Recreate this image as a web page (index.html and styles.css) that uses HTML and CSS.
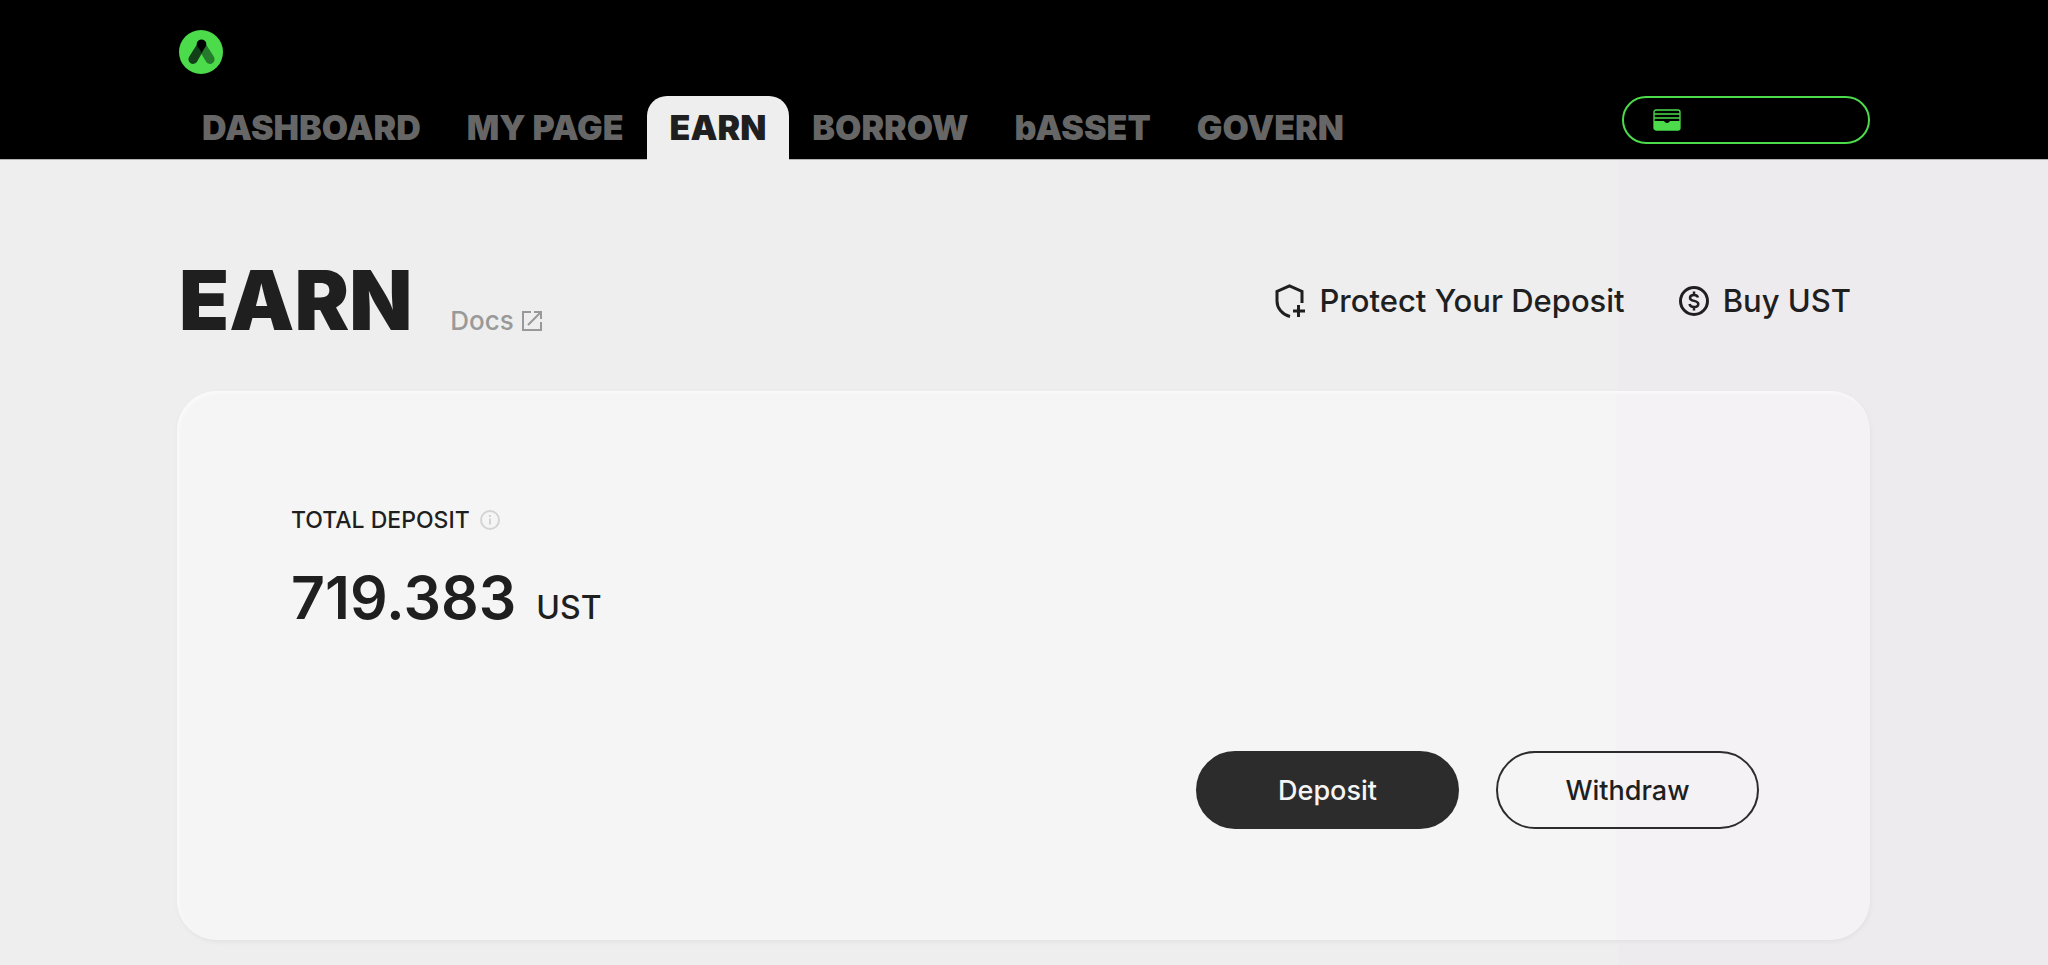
FILE: index.html
```html
<!DOCTYPE html>
<html lang="en">
<head>
<meta charset="utf-8">
<meta name="viewport" content="width=device-width, initial-scale=1">
<title>Earn</title>
<link rel="stylesheet" href="styles.css">
</head>
<body>
<header class="header">
  <a class="logo" href="#" aria-label="Home">
    <svg viewBox="0 0 44 44" width="44" height="44" aria-hidden="true">
      <circle cx="22" cy="22" r="22" fill="#4bdb4b"/>
      <path d="M18.200 16.500a4.500 4.500 0 0 1 8-3.500l8.500 13.500a4.500 4.500 0 0 1-7.500 5.500z" fill="#257a2b"/>
      <path d="M26.800 16.500a4.500 4.500 0 0 0-8-3.500l-8.500 13.500a4.500 4.500 0 0 0 7.500 5.500z" fill="#123f17"/>
      <path d="M22.500 9.500a4.500 4.500 0 0 1 4.300 6.500c-1 2-3.300 3.500-4.300 7-1-3.500-3.300-5-4.300-7a4.500 4.500 0 0 1 4.300-6.500z" fill="#000"/>
    </svg>
  </a>
  <div class="bar">
    <nav class="nav">
      <a class="tab" href="#">DASHBOARD</a>
      <a class="tab" href="#">MY PAGE</a>
      <a class="tab tab-active" href="#" aria-current="page">EARN</a>
      <a class="tab" href="#">BORROW</a>
      <a class="tab" href="#">bASSET</a>
      <a class="tab" href="#">GOVERN</a>
    </nav>
    <button class="wallet" type="button" aria-label="Wallet">
      <svg viewBox="0 0 28 22" width="28" height="22" aria-hidden="true">
        <rect x="1" y="1" width="26" height="20" rx="2" fill="none" stroke="#4bdb4b" stroke-width="1.300"/>
        <path d="M1 5h26M1 9h26" stroke="#4bdb4b" stroke-width="1.300"/>
        <path d="M1 12h9.500c1 0 1.500 2 3.500 2s2.500-2 3.500-2H27v7a2 2 0 0 1-2 2H3a2 2 0 0 1-2-2z" fill="#4bdb4b"/>
      </svg>
    </button>
  </div>
</header>
<main class="main">
  <div class="heading">
    <h1 class="title">EARN</h1>
    <a class="docs" href="#">Docs
      <svg viewBox="0 0 20 20" width="20" height="20" fill="none" stroke="currentColor" stroke-width="2" aria-hidden="true">
        <path d="M9 1H1v18h18v-8M12 1h7v7M19 1L6 14"/>
      </svg>
    </a>
    <div class="links">
      <a class="link" href="#">
        <svg viewBox="0 0 30 34" width="30" height="34" fill="none" stroke="currentColor" stroke-width="3" aria-hidden="true">
          <path d="M27 19V7.500L14.500 2 2 7.500V17c0 7 5 13.500 13 15.500M23.500 21v12M18 27h12"/>
        </svg>
        Protect Your Deposit
      </a>
      <a class="link" href="#">
        <svg viewBox="0 0 30 30" width="30" height="30" fill="none" stroke="currentColor" stroke-width="3" aria-hidden="true">
          <circle cx="15" cy="15" r="13.500"/>
          <path d="M19 11.500c-.6-2-2-2.500-4-2.500-2.300 0-4 1-4 2.900 0 4.200 8.300 1.800 8.300 6.100 0 2-1.800 3-4.300 3-2.300 0-4-.8-4.500-3M15 5.500V9M15 21v3.500" stroke-width="2.500"/>
        </svg>
        Buy UST
      </a>
    </div>
  </div>
  <section class="card">
    <h2 class="label">TOTAL DEPOSIT
      <svg viewBox="0 0 20 20" width="20" height="20" fill="none" stroke="#d4d4d4" stroke-width="2" aria-hidden="true">
        <circle cx="10" cy="10" r="9"/><path d="M10 8.500v6M10 5v2"/>
      </svg>
    </h2>
    <p class="amount">719.383 <span class="unit">UST</span></p>
    <div class="actions">
      <button class="button button-dark" type="button">Deposit</button>
      <button class="button" type="button">Withdraw</button>
    </div>
  </section>
</main>
</body>
</html>
```
FILE: styles.css
```css
* { box-sizing: border-box; }
body {
  margin: 0;
  min-height: 100vh;
  background: linear-gradient(90deg, #eeeeee 79%, #eeebee 79%);
  color: #1f1f1f;
  font-family: Inter, "Noto Sans", sans-serif;
  font-weight: 500;
}
a { color: inherit; text-decoration: none; }
svg { display: block; flex: none; }
.header {
  background: #000;
  padding: 30px 178px 0 179px;
  border-bottom: 1px solid #b4b4b4;
}
.logo { display: inline-block; vertical-align: top; }
.bar {
  display: flex;
  justify-content: space-between;
  align-items: flex-start;
  margin-top: 22px;
}
.nav { display: flex; }
.tab {
  height: 63px;
  padding: 0 23px;
  color: #666;
  font-size: 34px;
  font-weight: 900;
  line-height: 64px;
}
.tab-active {
  height: 64px;
  margin-bottom: -1px;
  background: #eee;
  color: #1f1f1f;
  border-radius: 20px 20px 0 0;
}
.wallet {
  display: flex;
  align-items: center;
  width: 248px;
  height: 48px;
  padding: 0 29px;
  background: #000;
  border: 2px solid #4bdb4b;
  border-radius: 24px;
}
.main { padding: 92px 178px 24px 177px; }
.heading { display: flex; align-items: flex-end; }
.title {
  margin: 0;
  padding-left: 2px;
  font-size: 82px;
  font-weight: 900;
  line-height: 98px;
}
.docs {
  display: flex;
  align-items: center;
  gap: 8px;
  margin: 0 0 13px 38px;
  color: #999;
  font-size: 26px;
  line-height: 32px;
}
.links {
  display: flex;
  gap: 54px;
  margin: 0 19px 30px auto;
}
.link {
  display: flex;
  align-items: center;
  gap: 14px;
  font-size: 31px;
  line-height: 38px;
}
.card {
  margin-top: 41px;
  padding: 114px 111px 111px 114px;
  background: linear-gradient(90deg, #f5f5f5 85%, #f4f2f5 85%);
  border-radius: 40px;
  box-shadow: inset 2px 2px 3px #fafafa, 1px 2px 4px #e2e2e2;
}
.label {
  display: flex;
  align-items: center;
  gap: 10px;
  margin: 0;
  font-size: 23px;
  font-weight: 500;
  line-height: 30px;
}
.amount {
  display: flex;
  align-items: baseline;
  gap: 20px;
  margin: 28px 0 0;
  font-size: 59px;
  font-weight: 600;
  line-height: 70px;
}
.unit { font-size: 32px; font-weight: 500; }
.actions {
  display: flex;
  justify-content: flex-end;
  gap: 37px;
  margin-top: 108px;
}
.button {
  width: 263px;
  height: 78px;
  border: 2px solid #2c2c2c;
  border-radius: 39px;
  background: transparent;
  color: #1f1f1f;
  font: inherit;
  font-size: 27px;
}
.button-dark { background: #2c2c2c; color: #f5f5f5; }
```
